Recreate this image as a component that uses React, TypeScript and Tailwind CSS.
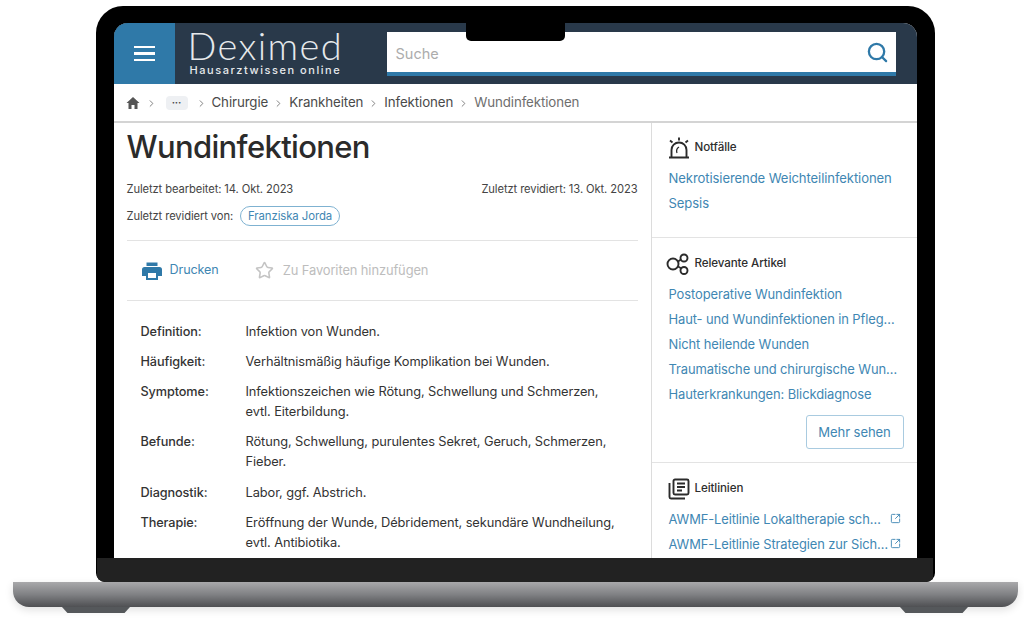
import React from "react";
import { ChevronRight, Search, Star, SquareArrowOutUpRight } from "lucide-react";

const rows: [string, string[], number][] = [
  ["Definition:", ["Infektion von Wunden."], 30],
  ["Häufigkeit:", ["Verhältnismäßig häufige Komplikation bei Wunden."], 30],
  ["Symptome:", ["Infektionszeichen wie Rötung, Schwellung und Schmerzen,", "evtl. Eiterbildung."], 50],
  ["Befunde:", ["Rötung, Schwellung, purulentes Sekret, Geruch, Schmerzen,", "Fieber."], 51],
  ["Diagnostik:", ["Labor, ggf. Abstrich."], 30],
  ["Therapie:", ["Eröffnung der Wunde, Débridement, sekundäre Wundheilung,", "evtl. Antibiotika."], 50],
];

const articles = [
  "Postoperative Wundinfektion",
  "Haut- und Wundinfektionen in Pfleg…",
  "Nicht heilende Wunden",
  "Traumatische und chirurgische Wun…",
  "Hauterkrankungen: Blickdiagnose",
];

function Sep() {
  return <ChevronRight className="w-[11px] h-[11px] text-[#777] shrink-0" strokeWidth={2} />;
}

function HomeIcon() {
  return (
    <svg width="14" height="14" viewBox="0 0 14 14" className="shrink-0 mr-[6px]" fill="#555">
      <path d="M7 1L0.5 7H2.5V13H5.5V9H8.5V13H11.5V7H13.5L7 1Z" />
    </svg>
  );
}

function PrinterIcon() {
  return (
    <svg width="20" height="18" viewBox="0 0 20 18" className="shrink-0 mr-[8px]">
      <path d="M4.5 0.5h11v3.5h-11z" fill="#2f79a8" />
      <path d="M2.5 5h15A2.5 2.5 0 0 1 20 7.5V14h-4v4H4v-4H0V7.5A2.5 2.5 0 0 1 2.5 5z" fill="#2f79a8" />
      <rect x="6" y="11" width="8" height="5" fill="#fff" />
    </svg>
  );
}

function Alarm() {
  return (
    <svg width="22" height="22" viewBox="0 0 22 22" fill="none" stroke="#2b2b2b" strokeWidth="1.9" className="shrink-0">
      <path d="M3.5 20V13a7.5 7.5 0 0 1 15 0v7" />
      <path d="M1 20.5h20" />
      <path d="M11 0.5v3M2 3.5l2.5 2M20 3.5l-2.5 2" />
      <path d="M9 16a5 5 0 0 1 2-6" strokeWidth="1.3" />
    </svg>
  );
}

function Nodes() {
  return (
    <svg width="24" height="22" viewBox="0 0 24 22" fill="none" stroke="#2b2b2b" strokeWidth="1.9" className="shrink-0">
      <circle cx="7" cy="11" r="5.5" />
      <circle cx="18" cy="5" r="3.5" />
      <circle cx="18" cy="17.5" r="3.5" />
      <path d="M12 8.5l3-2M12 13.5l3.5 2" />
    </svg>
  );
}

function Guide() {
  return (
    <svg width="22" height="22" viewBox="0 0 22 22" fill="none" stroke="#2b2b2b" strokeWidth="1.9" className="shrink-0">
      <rect x="5.5" y="1.5" width="15" height="15" rx="1.5" />
      <path d="M1.5 5v14a1.5 1.5 0 0 0 1.5 1.5h14" />
      <path d="M9 5.5h8M9 9h8M9 12.5h5" />
    </svg>
  );
}

function SideHead({ icon, title }: { icon: React.ReactNode; title: string }) {
  return (
    <div className="flex items-center gap-[5px] -ml-[1px] h-[24px] text-[11.6px] font-medium text-[#2e2e2e]">
      {icon}
      <span>{title}</span>
    </div>
  );
}

export default function App() {
  return (
    <div className="w-[1024px] h-[627px] bg-white overflow-hidden flex flex-col items-center relative pl-[6px] font-['Inter','Liberation_Sans',sans-serif] tracking-[-0.1px]">
      <div className="mt-[6px] w-[839px] h-[576px] bg-black rounded-t-[27px] rounded-b-[9px] pt-[17px] flex flex-col overflow-hidden shrink-0 relative">
        <div className="mx-[18px] h-[535px] rounded-t-[14px] overflow-hidden bg-white flex flex-col shrink-0">
          <header className="h-[61px] bg-[#29394a] flex shrink-0">
            <div className="w-[61px] bg-[#2f79a8] flex flex-col items-center justify-center gap-[4px]">
              <span className="block w-[21px] h-[2.5px] bg-white" />
              <span className="block w-[21px] h-[2.5px] bg-white" />
              <span className="block w-[21px] h-[2.5px] bg-white" />
            </div>
            <div className="w-[212px] pl-[14px] flex flex-col text-[#e6e9ec]">
              <div className="text-[38px] leading-[34px] mt-[5px] -ml-[1px] font-light tracking-[1.4px] font-['Lato',sans-serif]">Deximed</div>
              <div className="text-[11px] leading-[12px] mt-[2px] ml-[1px] font-medium tracking-[1.55px] whitespace-nowrap">Hausarztwissen online</div>
            </div>
            <div className="w-[509px] h-[44px] mt-[9px] bg-white border-b-[4px] border-[#2f79a8] flex items-center justify-between pl-[9px] pr-[7px] pt-[3px]">
              <span className="text-[14.5px] text-[#acacac] tracking-normal">Suche</span>
              <Search className="w-[23px] h-[23px] text-[#2f79a8] -mt-[3px]" strokeWidth={2.4} />
            </div>
          </header>
          <nav className="h-[39px] shrink-0 flex items-center pl-[12px] pt-[1px] border-b-2 border-[#d4d4d4] text-[13.3px] text-[#4a4a4a]">
            <HomeIcon />
            <Sep />
            <span className="ml-[9px] mr-[8px] w-[22px] h-[14px] rounded-sm bg-[#eef0f3] text-[10px] leading-[12px] text-center font-bold">···</span>
            <Sep />
            <span className="mx-[5px]">Chirurgie</span>
            <Sep />
            <span className="mx-[5px]">Krankheiten</span>
            <Sep />
            <span className="mx-[5px]">Infektionen</span>
            <Sep />
            <span className="mx-[5px] text-[#6e6e6e]">Wundinfektionen</span>
          </nav>
          <div className="flex flex-1 min-h-0 overflow-hidden">
            <main className="w-[538px] shrink-0 border-r border-[#dcdcdc] pl-[13px] pr-[13px] overflow-hidden">
              <h1 className="text-[31px] leading-[38px] mt-[5px] font-medium text-[#2b2b2b] tracking-[-0.65px]">Wundinfektionen</h1>
              <div className="flex justify-between mt-[15px] text-[11.2px] leading-[16px] text-[#444]">
                <span>Zuletzt bearbeitet: 14. Okt. 2023</span>
                <span>Zuletzt revidiert: 13. Okt. 2023</span>
              </div>
              <div className="flex items-center mt-[9px] text-[11.2px] text-[#444] h-[20px]">
                <span>Zuletzt revidiert von:</span>
                <span className="ml-[7px] h-[20px] px-[7px] leading-[18px] rounded-full border border-[#7fb2d1] text-[#3f87b3] text-[11.4px]">Franziska Jorda</span>
              </div>
              <div className="mt-[14px] h-[61px] border-y border-[#e3e3e3] flex items-center pl-[15px] text-[12.6px]">
                <PrinterIcon />
                <span className="text-[#3f87b3]">Drucken</span>
                <Star className="w-[19px] h-[19px] text-[#c4c4c4] ml-[36px] mr-[9px]" />
                <span className="text-[#bdbdbd] text-[12.9px]">Zu Favoriten hinzufügen</span>
              </div>
              <div className="mt-[21px] pl-[14px] text-[12.85px] leading-[20px] text-[#333]">
                {rows.map(([k, v, h]) => (
                  <div key={k} className="flex" style={{ height: h }}>
                    <div className="w-[105px] shrink-0 font-medium text-[12.7px]">{k}</div>
                    <div>
                      {v.map((l) => (
                        <div key={l} className="whitespace-nowrap">{l}</div>
                      ))}
                    </div>
                  </div>
                ))}
              </div>
            </main>
            <aside className="flex-1 min-w-0 overflow-hidden text-[13.1px] text-[#3f87b3]">
              <section className="h-[115px] border-b border-[#e3e3e3] pl-[17px] pt-[13px]">
                <SideHead icon={<Alarm />} title="Notfälle" />
                <div className="mt-[6px] h-[25px] leading-[25px] whitespace-nowrap">Nekrotisierende Weichteilinfektionen</div>
                <div className="h-[25px] leading-[25px]">Sepsis</div>
              </section>
              <section className="h-[225px] border-b border-[#e3e3e3] pl-[17px] pt-[14px] pr-[13px]">
                <div className="-ml-[2px]"><SideHead icon={<Nodes />} title="Relevante Artikel" /></div>
                <div className="mt-[6px] text-[12.95px]">
                  {articles.map((a) => (
                    <div key={a} className="h-[25px] leading-[25px] whitespace-nowrap">{a}</div>
                  ))}
                </div>
                <div className="flex justify-end mt-[8px]">
                  <span className="w-[98px] h-[34px] leading-[32px] text-center rounded-[3px] border border-[#a9cbe0]">Mehr sehen</span>
                </div>
              </section>
              <section className="pl-[17px] pt-[14px] pr-[16px]">
                <SideHead icon={<Guide />} title="Leitlinien" />
                <div className="mt-[6px] text-[12.9px]">
                  {["AWMF-Leitlinie Lokaltherapie sch…", "AWMF-Leitlinie Strategien zur Sich…"].map((a) => (
                    <div key={a} className="h-[25px] leading-[25px] whitespace-nowrap flex justify-between items-center">
                      <span>{a}</span>
                      <SquareArrowOutUpRight className="w-[11px] h-[11px] shrink-0 -mt-[3px]" strokeWidth={2} />
                    </div>
                  ))}
                </div>
              </section>
            </aside>
          </div>
        </div>
        <div className="flex-1 mx-[1.5px] bg-[#222222]" />
        <div className="absolute left-[370px] top-0 w-[99px] h-[35px] bg-black rounded-b-[5px]" />
      </div>
      <div className="w-[1005px] h-[25px] rounded-b-[16px] bg-gradient-to-b from-[#a9a9ab] via-[#808184] to-[#4f5053] shrink-0 shadow-[0_3px_8px_rgba(0,0,0,0.12)]" />
      <div className="w-[906px] flex justify-between shrink-0">
        <div className="w-[68px] h-[6px] bg-[#55585b] [clip-path:polygon(0_0,100%_0,92%_100%,8%_100%)]" />
        <div className="w-[68px] h-[6px] bg-[#55585b] [clip-path:polygon(0_0,100%_0,92%_100%,8%_100%)]" />
      </div>
    </div>
  );
}
